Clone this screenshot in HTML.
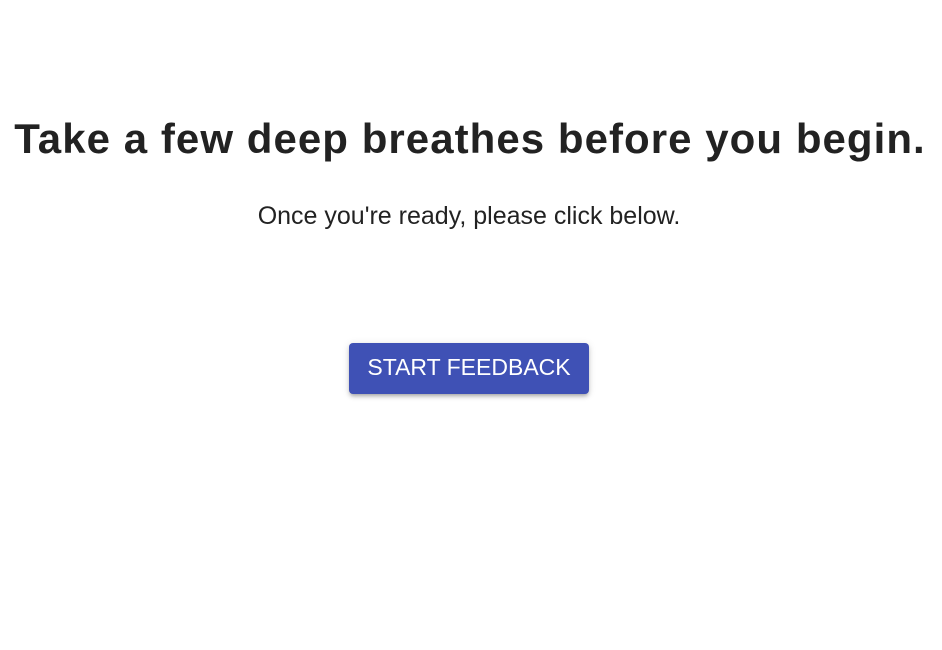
<!DOCTYPE html>
<html><head><meta charset="utf-8"><style>
html,body{margin:0;padding:0;background:#fff;width:942px;height:650px;overflow:hidden;font-family:"Liberation Sans",sans-serif;color:#222;}
h1{position:absolute;left:0;width:940px;top:115px;margin:0;text-align:center;font-size:42px;font-weight:bold;letter-spacing:1.05px;white-space:nowrap;}
p{position:absolute;left:0;width:938px;top:202px;margin:0;text-align:center;font-size:25px;white-space:nowrap;}
.btn{position:absolute;left:349px;top:343px;width:240px;height:51px;background:#3f51b5;border-radius:4px;color:#fff;font-size:23px;line-height:49px;text-align:center;box-shadow:0 3px 3px -2px rgba(0,0,0,.2),0 3px 4px 0 rgba(0,0,0,.14),0 1px 8px 0 rgba(0,0,0,.12);}
</style></head><body>
<h1>Take a few deep breathes before you begin.</h1>
<p>Once you're ready, please click below.</p>
<div class="btn">START FEEDBACK</div>
</body></html>
